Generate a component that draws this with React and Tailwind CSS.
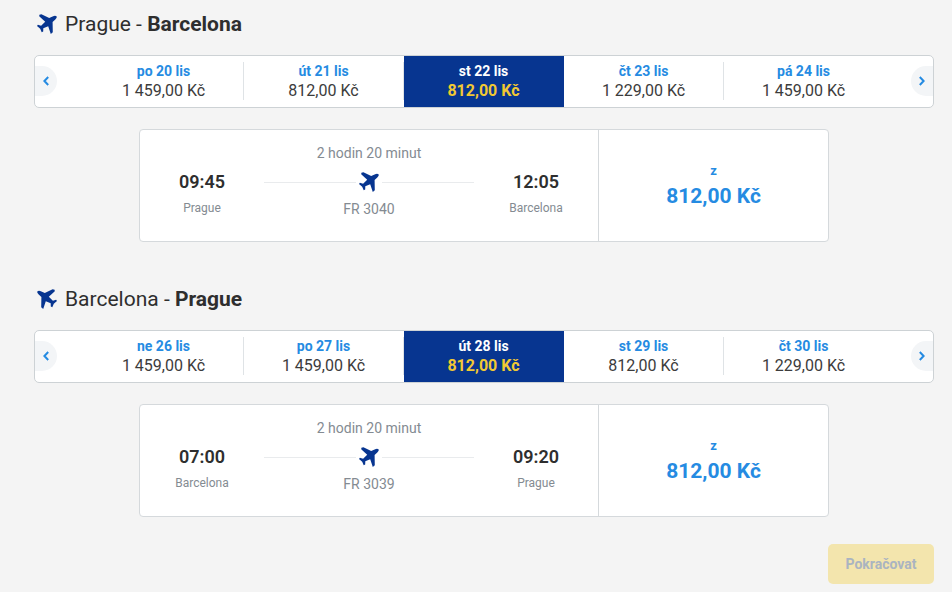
import React, { useState } from 'react';

const FLIGHTS = [
  {
    id: 'outbound',
    from: 'Prague',
    to: 'Barcelona',
    selected: 2,
    days: [
      { date: 'po 20 lis', price: '1 459,00 Kč' },
      { date: 'út 21 lis', price: '812,00 Kč' },
      { date: 'st 22 lis', price: '812,00 Kč' },
      { date: 'čt 23 lis', price: '1 229,00 Kč' },
      { date: 'pá 24 lis', price: '1 459,00 Kč' }
    ],
    departure: '09:45',
    arrival: '12:05',
    number: 'FR 3040',
    duration: '2 hodin 20 minut'
  },
  {
    id: 'inbound',
    from: 'Barcelona',
    to: 'Prague',
    selected: 2,
    days: [
      { date: 'ne 26 lis', price: '1 459,00 Kč' },
      { date: 'po 27 lis', price: '1 459,00 Kč' },
      { date: 'út 28 lis', price: '812,00 Kč' },
      { date: 'st 29 lis', price: '812,00 Kč' },
      { date: 'čt 30 lis', price: '1 229,00 Kč' }
    ],
    departure: '07:00',
    arrival: '09:20',
    number: 'FR 3039',
    duration: '2 hodin 20 minut'
  }
];

const Plane = ({ flipped = false }) => (
  <svg
    viewBox="0 0 20 20"
    className={`h-5 w-5 shrink-0 overflow-visible fill-[#073590] ${flipped ? '-scale-x-100' : ''}`}
    aria-hidden="true"
  >
    <path d="M2.4 .8 4.4.2 12.2 3.9 15.6 2.4Q18.2 1.4 19.6 2.3 20.4 3.8 18.3 5.6L15.6 8 15.8 18.2 13.8 20 11.2 12.2 6.3 14.3 6.2 17.4 4.7 18.2 3.2 14.7 0 11.9.9 10.7 4.1 11.8 8.2 7.8 2.2 2.2Z" />
  </svg>
);

const Chevron = ({ flipped = false }) => (
  <svg
    viewBox="0 0 6 10"
    className={`h-[10px] w-[6px] fill-none stroke-[#258be2] ${flipped ? '-scale-x-100' : ''}`}
    strokeWidth="2"
    aria-hidden="true"
  >
    <path d="M5.2 1 1.4 5 5.2 9" />
  </svg>
);

const DayPicker = ({ days, selected, onSelect }) => (
  <div className="flex h-[53px] overflow-hidden rounded-[5px] border border-[#cdd2d5] bg-white">
    <div className="flex w-[49px] shrink-0 items-center pb-px">
      <button
        type="button"
        aria-label="Předchozí dny"
        className="flex h-[30px] w-[22px] items-center justify-center rounded-r-full bg-[#f3f5f7]"
      >
        <Chevron />
      </button>
    </div>

    {days.map((day, i) => {
      const active = i === selected;
      const divider = !active && i < days.length - 1;
      return (
        <button
          key={day.date}
          type="button"
          aria-pressed={active}
          onClick={() => onSelect(i)}
          className={`flex min-w-0 flex-1 items-center pb-px ${active ? 'bg-[#073590]' : ''}`}
        >
          <span className={`flex h-[38px] w-full flex-col items-center justify-center border-r ${divider ? 'border-[#dfe3e6]' : 'border-transparent'}`}>
            <span className={`text-sm leading-[19px] font-bold ${active ? 'text-white' : 'text-[#258be2]'}`}>{day.date}</span>
            <span className={`text-base leading-[19px] ${active ? 'font-bold text-[#f1c933]' : 'text-[#3c3c3c]'}`}>{day.price}</span>
          </span>
        </button>
      );
    })}

    <div className="flex w-[49px] shrink-0 items-center justify-end pb-px">
      <button
        type="button"
        aria-label="Další dny"
        className="flex h-[30px] w-[22px] items-center justify-center rounded-l-full bg-[#f3f5f7]"
      >
        <Chevron flipped />
      </button>
    </div>
  </div>
);

const Stop = ({ time, city }) => (
  <div className="flex w-[124px] shrink-0 flex-col items-center pt-10">
    <span className="text-lg leading-6 font-semibold text-[#2e2e2e]">{time}</span>
    <span className="pt-1 text-xs leading-5 text-[#848b92]">{city}</span>
  </div>
);

const FlightCard = ({ flight, price }) => (
  <div className="mx-auto flex h-[113px] max-w-[690px] rounded border border-[#d5d9dc] bg-white">
    <div className="flex flex-1">
      <Stop time={flight.departure} city={flight.from} />
      <div className="flex flex-1 flex-col items-center pt-[13px] text-sm text-[#848b92]">
        <span className="leading-5">{flight.duration}</span>
        <div className="flex w-full items-center gap-[3px] pt-[9px] pb-[7px]">
          <span className="h-px flex-1 bg-[#e9ebed]" />
          <Plane />
          <span className="h-px flex-1 bg-[#e9ebed]" />
        </div>
        <span className="leading-5">{flight.number}</span>
      </div>
      <Stop time={flight.arrival} city={flight.to} />
    </div>
    <div className="flex w-[230px] flex-col items-center justify-center border-l border-[#d5d9dc] font-bold text-[#258be2]">
      <span className="text-[13px] leading-5">z</span>
      <span className="text-[21px] leading-[30px]">{price}</span>
    </div>
  </div>
);

const FlightSection = ({ flight }) => {
  const [selected, setSelected] = useState(flight.selected);

  return (
    <section>
      <h2 className="flex items-center gap-2 pb-4 pl-[3px] text-[21px] leading-[30px] font-normal text-[#2e2e2e]">
        <Plane flipped={flight.id === 'inbound'} />
        <span>
          {flight.from} - <strong className="font-bold">{flight.to}</strong>
        </span>
      </h2>
      <DayPicker days={flight.days} selected={selected} onSelect={setSelected} />
      <div className="pt-[21px]">
        <FlightCard flight={flight} price={flight.days[selected].price} />
      </div>
    </section>
  );
};

export default function App() {
  return (
    <main className="min-h-screen bg-[#f4f4f4] pt-[9px] pr-[18px] pb-2 pl-[34px] font-['Roboto',sans-serif]">
      <div className="flex flex-col gap-[42px]">
        {FLIGHTS.map((flight) => (
          <FlightSection key={flight.id} flight={flight} />
        ))}
      </div>

      <div className="flex justify-end pt-[27px]">
        <button type="button" disabled className="h-10 w-[106px] rounded-[5px] bg-[#f3e5ad] text-sm font-bold text-[#aab4c1]">
          Pokračovat
        </button>
      </div>
    </main>
  );
}
